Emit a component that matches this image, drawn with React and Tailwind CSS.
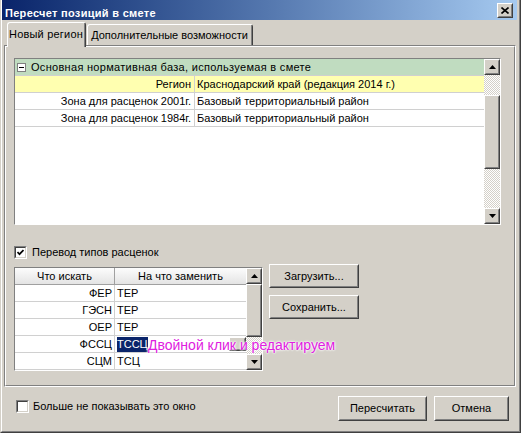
import React from "react";

function Raised({ className = "", innerClass = "", children }) {
  return (
    <div className={`border border-t-white border-l-white border-r-[#404040] border-b-[#404040] ${className}`}>
      <div className={`w-full h-full border border-t-[#d4d0c8] border-l-[#d4d0c8] border-r-[#808080] border-b-[#808080] bg-[#d4d0c8] ${innerClass}`}>
        {children}
      </div>
    </div>
  );
}

function Arrow({ down }) {
  return (
    <svg width="7" height="4" viewBox="0 0 7 4">
      {down ? <polygon points="0,0 7,0 3.5,4" fill="black" /> : <polygon points="3.5,0 7,4 0,4" fill="black" />}
    </svg>
  );
}

function ScrollBar({ gapTop, thumb }) {
  return (
    <div className="w-[16px] h-full flex flex-col shrink-0">
      <Raised className="w-[16px] h-[16px] shrink-0" innerClass="flex items-center justify-center">
        <Arrow />
      </Raised>
      <div className={`${gapTop} shrink-0 bg-[repeating-conic-gradient(#d4d0c8_0%_25%,#ffffff_0%_50%)] bg-[length:2px_2px]`} />
      <Raised className={`w-[16px] ${thumb} shrink-0`} />
      <div className="flex-1 bg-[repeating-conic-gradient(#d4d0c8_0%_25%,#ffffff_0%_50%)] bg-[length:2px_2px]" />
      <Raised className="w-[16px] h-[16px] shrink-0" innerClass="flex items-center justify-center">
        <Arrow down />
      </Raised>
    </div>
  );
}

function CheckBox({ checked }) {
  return (
    <div className="w-[13px] h-[13px] border border-t-[#808080] border-l-[#808080] border-r-white border-b-white shrink-0">
      <div className="w-full h-full border border-t-[#404040] border-l-[#404040] border-r-[#d4d0c8] border-b-[#d4d0c8] bg-white flex items-center justify-center">
        {checked && (
          <svg width="7" height="7" viewBox="0 0 7 7">
            <polyline points="0.5,3 2.5,5.2 6.5,1" fill="none" stroke="black" strokeWidth="1.7" />
          </svg>
        )}
      </div>
    </div>
  );
}

const regionRows = [
  ["Регион", "Краснодарский край (редакция 2014 г.)", true],
  ["Зона для расценок 2001г.", "Базовый территориальный район", false],
  ["Зона для расценок 1984г.", "Базовый территориальный район", false],
];

const replaceRows = [
  ["ФЕР", "ТЕР"],
  ["ГЭСН", "ТЕР"],
  ["ОЕР", "ТЕР"],
  ["ФССЦ", "ТССЦ"],
  ["СЦМ", "ТСЦ"],
];

export default function App() {
  return (
    <div className="w-[521px] h-[433px] bg-[#d4d0c8] border-r border-b border-l border-r-[#404040] border-b-[#404040] border-l-[#d4d0c8] font-['Liberation_Sans',Arial,sans-serif] text-[11px] text-black leading-[13px] overflow-hidden">
      <div className="w-full h-full border-r border-b border-l border-r-[#808080] border-b-[#808080] border-l-white flex flex-col">
        {/* title */}
        <div className="h-[20px] mr-[2px] flex items-end bg-linear-to-r from-[#0a246a] to-[#a6caf0] shrink-0">
          <span className="pl-[3px] text-white font-bold tracking-[0.3px]">Пересчет позиций в смете</span>
          <Raised className="ml-auto mr-[4px] self-start mt-[3px] w-[16px] h-[15px]" innerClass="flex items-center justify-center">
            <svg width="8" height="7" viewBox="0 0 8 7">
              <path d="M0.5 0.5 L7.5 6.5 M7.5 0.5 L0.5 6.5" stroke="black" strokeWidth="1.6" />
            </svg>
          </Raised>
        </div>

        {/* tabs */}
        <div className="mt-[2px] h-[25px] -mb-[2px] flex items-start pl-[5px] relative z-10 shrink-0">
          <div className="w-[79px] h-[25px] border-t border-l border-r border-t-white border-l-white border-r-[#404040] rounded-t-[3px] bg-[#d4d0c8]">
            <div className="h-full border-r border-r-[#808080] flex items-center justify-center pb-[2px] tracking-[0.2px]">Новый регион</div>
          </div>
          <div className="ml-[1px] mt-[2px] w-[166px] h-[21px] border-t border-l border-r border-t-white border-l-white border-r-[#404040] rounded-t-[3px] bg-[#d4d0c8]">
            <div className="h-full border-r border-r-[#808080] flex items-center justify-center pt-[1px]">Дополнительные возможности</div>
          </div>
        </div>

        {/* panel */}
        <div className="ml-[2px] w-[512px] h-[342px] border border-t-[#808080] border-l-[#808080] border-r-white border-b-white shrink-0">
          <div className="w-full h-full border border-t-white border-l-white border-r-[#808080] border-b-[#808080] flex flex-col pl-[8px] pt-[11px]">
            {/* top grid */}
            <div className="w-[487px] h-[167px] border border-t-[#808080] border-l-[#808080] border-r-white border-b-white bg-white flex">
              <div className="flex-1 flex flex-col">
                <div className="h-[17px] flex items-center border-b border-[#d0d0d0] bg-[#c0dcc0]">
                  <div className="ml-[2px] w-[9px] h-[9px] border border-[#808080] bg-white flex items-center justify-center">
                    <div className="w-[5px] h-[1px] bg-black" />
                  </div>
                  <span className="ml-[5px] tracking-[0.3px]">Основная нормативная база, используемая в смете</span>
                </div>
                {regionRows.map(([a, b, hl]) => (
                  <div key={a} className={`h-[17px] flex border-b border-[#d0d0d0] ${hl ? "bg-[#ffffb0]" : "bg-white"}`}>
                    <div className="w-[180px] border-r border-[#d0d0d0] flex items-center justify-end pr-[3px]">{a}</div>
                    <div className="flex-1 flex items-center pl-[2px]">{b}</div>
                  </div>
                ))}
              </div>
              <ScrollBar gapTop="h-[20px]" thumb="h-[74px]" />
            </div>

            <div className="mt-[21px] flex items-center h-[13px]">
              <CheckBox checked />
              <span className="ml-[5px]">Перевод типов расценок</span>
            </div>

            <div className="mt-[8px] flex items-start relative">
              {/* bottom grid */}
              <div className="w-[249px] h-[104px] border border-t-[#808080] border-l-[#808080] border-r-white border-b-white bg-white flex">
                <div className="flex-1 flex flex-col">
                  <div className="h-[17px] flex border-b border-[#a0a0a0] bg-linear-to-b from-[#fcfcfc] to-[#e4e4e4]">
                    <div className="w-[100px] border-r border-[#a0a0a0] flex items-center justify-center">Что искать</div>
                    <div className="flex-1 flex items-center justify-center">На что заменить</div>
                  </div>
                  {replaceRows.map(([a, b]) => (
                    <div key={a} className="h-[17px] flex border-b border-[#d0d0d0]">
                      <div className="w-[100px] border-r border-[#d0d0d0] flex items-center justify-end pr-[2px]">{a}</div>
                      <div className="flex-1 flex items-center pl-[2px] relative">
                        {a === "ФССЦ" ? (
                          <>
                            <span className="bg-[#0a246a] text-white h-[15px] flex items-center">{b}</span>
                            <Raised className="absolute right-0 top-[1px] w-[17px] h-[14px]" />
                          </>
                        ) : (
                          b
                        )}
                      </div>
                    </div>
                  ))}
                </div>
                <ScrollBar gapTop="h-0" thumb="h-[53px]" />
              </div>

              <div className="ml-[6px] -mt-[3px] flex flex-col gap-[7px]">
                <Raised className="w-[90px] h-[24px]" innerClass="flex items-center justify-center">Загрузить...</Raised>
                <Raised className="w-[90px] h-[24px]" innerClass="flex items-center justify-center">Сохранить...</Raised>
              </div>

              <span className="absolute left-[134px] top-[70px] h-[17px] flex items-center whitespace-nowrap text-[14px] text-[#e020e0] [text-shadow:0_0_2px_#ffffff,0_0_2px_#ffffff,0_0_3px_#ffffff] z-20">
                Двойной клик и редактируем
              </span>
            </div>
          </div>
        </div>

        {/* bottom bar */}
        <div className="flex items-start pt-[9px] pl-[14px] pr-[10px]">
          <div className="mt-[4px] flex items-center">
            <CheckBox />
            <span className="ml-[4px]">Больше не показывать это окно</span>
          </div>
          <Raised className="ml-auto w-[89px] h-[25px]" innerClass="flex items-center justify-center">Пересчитать</Raised>
          <Raised className="ml-[7px] w-[75px] h-[25px]" innerClass="flex items-center justify-center">Отмена</Raised>
        </div>
      </div>
    </div>
  );
}
